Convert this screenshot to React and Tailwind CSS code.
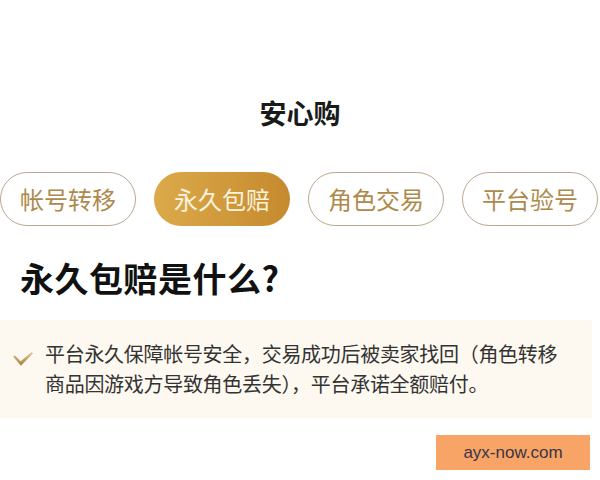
export default function App() {
  const pills = ["帐号转移", "永久包赔", "角色交易", "平台验号"];
  return (
    <div
      className="relative w-[600px] h-[480px] bg-white overflow-hidden flex flex-col"
      style={{ fontFamily: '"Noto Sans CJK SC", "Noto Sans", sans-serif' }}
    >
      <div className="pt-[95px] text-center text-[27px] leading-[36px] font-bold text-[#1a1a1a]">
        安心购
      </div>
      <div className="mt-[41px] flex gap-[18px]">
        {pills.map((p, i) =>
          i === 1 ? (
            <div
              key={p}
              className="w-[136px] h-[54px] rounded-full flex items-center justify-center text-[24px] text-[#fbf3de] bg-gradient-to-r from-[#dcaa4a] to-[#c58a2d]"
            >
              {p}
            </div>
          ) : (
            <div
              key={p}
              className="w-[136px] h-[54px] rounded-full border border-[#b9aa8e] flex items-center justify-center text-[24px] text-[#ad8a4c]"
            >
              {p}
            </div>
          )
        )}
      </div>
      <div className="mt-[32px] pl-[20px] text-[34px] leading-[40px] font-bold text-[#111] tracking-[0.5px]">
        永久包赔是什么?
      </div>
      <div className="mt-[22px] w-[592px] h-[98px] bg-[#fdf9f1] flex pt-[19px]">
        <div className="w-[45px] flex justify-center pt-[12px]">
          <svg width="22" height="16" viewBox="0 0 22 16" className="ml-[1px]">
            <defs>
              <linearGradient id="ck" x1="0" y1="0" x2="0" y2="1">
                <stop offset="0" stopColor="#e2c48a" />
                <stop offset="1" stopColor="#a8803e" />
              </linearGradient>
            </defs>
            <path
              d="M1 5.5 L3.2 4.6 L8.6 10.2 L19.5 1.2 L21 2.2 L9 14.8 Z"
              fill="url(#ck)"
            />
          </svg>
        </div>
        <div className="text-[20px] leading-[30px] text-[#333] tracking-[-0.3px]">
          平台永久保障帐号安全，交易成功后被卖家找回（角色转移
          <br />
          商品因游戏方导致角色丢失），平台承诺全额赔付。
        </div>
      </div>
      <div className="absolute left-[436px] top-[435px] w-[154px] h-[35px] bg-[#f7a466] flex items-center justify-center text-[17px] text-[#3b3446]"
        style={{ fontFamily: '"Liberation Sans", Arial, sans-serif' }}
      >
        ayx-now.com
      </div>
    </div>
  );
}
